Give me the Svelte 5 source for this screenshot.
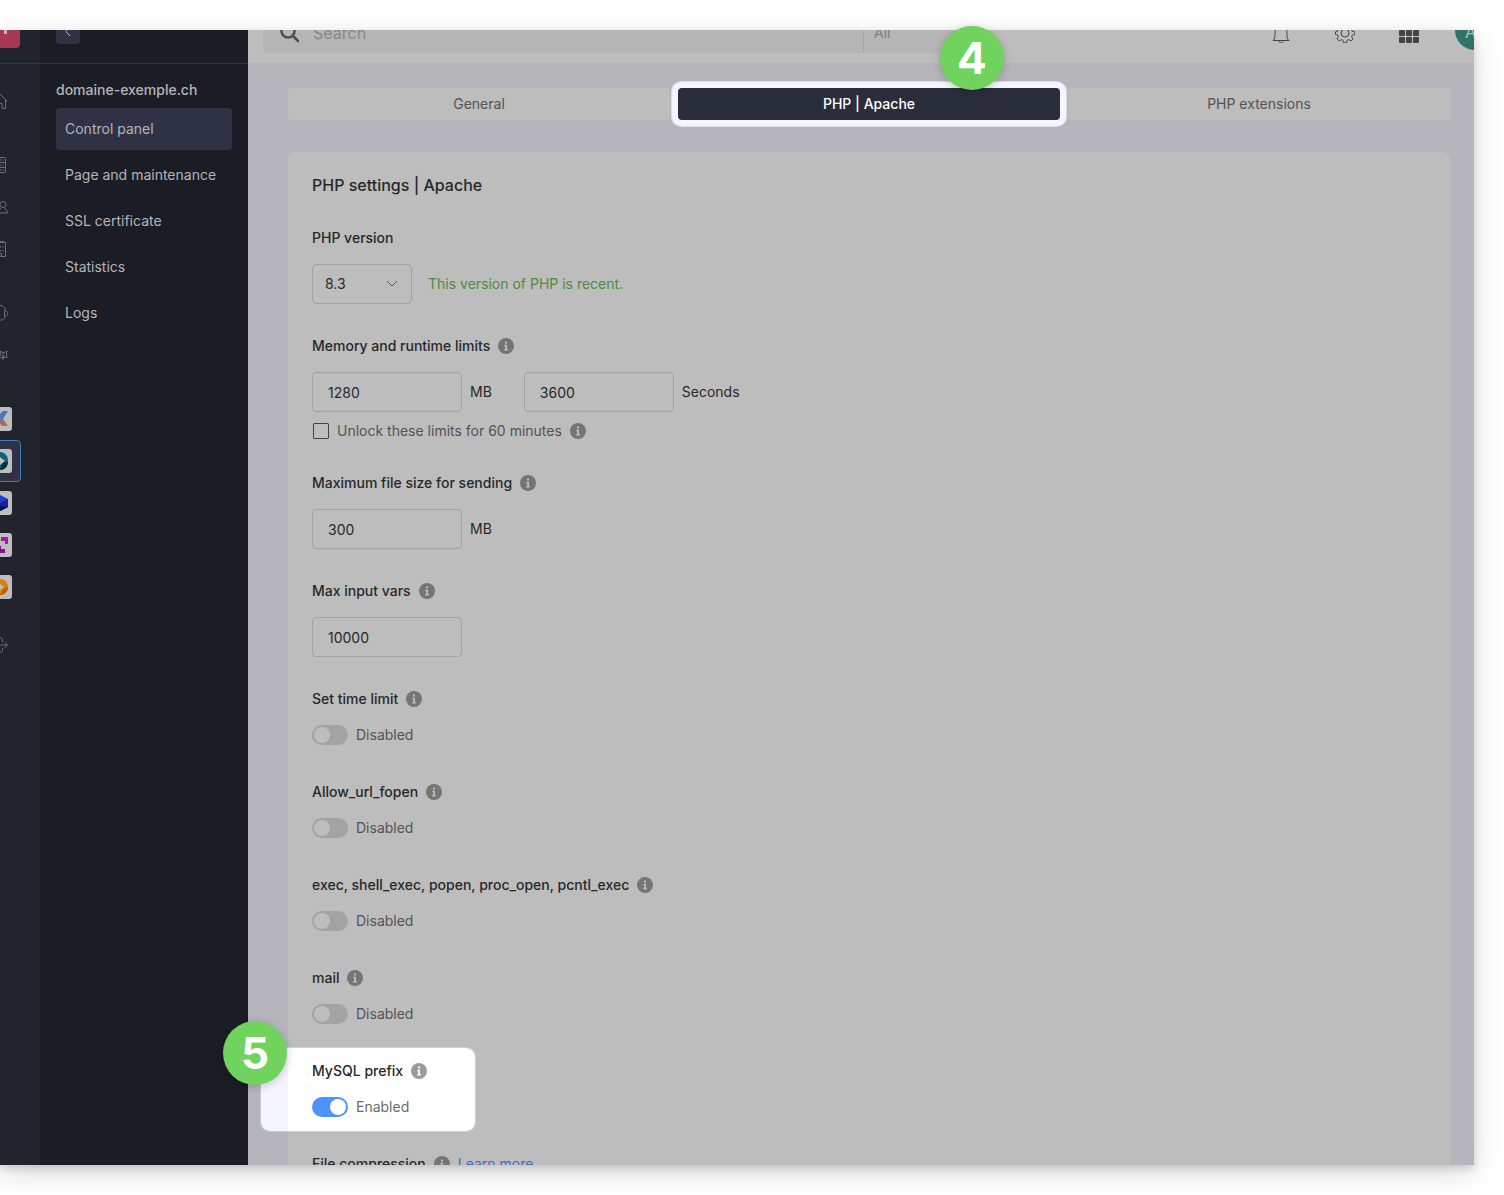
<script>
 const menu = ['Control panel', 'Page and maintenance', 'SSL certificate', 'Statistics', 'Logs'];
 const tabs = ['General', 'PHP | Apache', 'PHP extensions'];
 let current = 'Control panel';
 let activeTab = 'PHP | Apache';
 let version = '8.3';
 let memory = '1280';
 let runtime = '3600';
 let unlock = false;
 let fileSize = '300';
 let inputVars = '10000';
 let switches = [
     { id: 'time', name: 'Set time limit', on: false },
     { id: 'fopen', name: 'Allow_url_fopen', on: false },
     { id: 'exec', name: 'exec, shell_exec, popen, proc_open, pcntl_exec', on: false },
     { id: 'mail', name: 'mail', on: false },
     { id: 'mysql', name: 'MySQL prefix', on: true, step: 5 },
 ];
</script>

{#snippet info()}
    <svg class="info" viewBox="0 0 16 16" aria-hidden="true">
        <circle cx="8" cy="8" r="8" />
        <path d="M7 3.6h2v2H7zM6.2 6.8H9v4.4h1v1.2H6v-1.2h1.2V8h-1z" />
    </svg>
{/snippet}

<div class="page">
    <div class="window">
        <div class="app">
            <nav class="rail" aria-label="Products">
                <div class="brand">
                    <a class="logo" href="#home" aria-label="Home">
                        <svg viewBox="0 0 40 40"><path d="M10 12h17v14h-3V15H10z" fill="#bdbdbd" /></svg>
                    </a>
                </div>
                <a class="item first" href="#dashboard" aria-label="Dashboard">
                    <svg class="line" viewBox="0 0 16 16"><path d="M.5 8.5 8 1l7.500 7.500M2.500 7v8.500h3.500v-5h4v5h3.500V7" /></svg>
                </a>
                <a class="item gap" href="#servers" aria-label="Servers">
                    <svg class="line" viewBox="0 0 16 16"><rect x="2.500" y=".5" width="11" height="15" rx="1" /><path d="M2.500 5.500h11M2.500 10.500h11M8 3h1.500M8 8h1.500M8 13h1.500M11 2.500v1M11 7.500v1M11 12.500v1" /></svg>
                </a>
                <a class="item" href="#users" aria-label="Users">
                    <svg class="line" viewBox="0 0 16 16"><circle cx="11" cy="5.500" r="3" /><path d="M9 8.500c0 2-3 2.500-3.500 5.500h10c0-3-2.500-3.500-3-5.500M5 3C2 3 2 8 4 9c-1 1-3 1-3.500 4h3" /></svg>
                </a>
                <a class="item" href="#company" aria-label="Company">
                    <svg class="line" viewBox="0 0 16 16"><path d="M2.500 15.500v-14h11v14zM3.500.5h8l2 1.500M5.500 5v2M8.500 5v1.500M11 5v1.500M5.500 9v1.500M8.500 9v1.500M11 9v1.500M6.500 15.500v-3h3v3" /></svg>
                </a>
                <a class="item gap" href="#support" aria-label="Support">
                    <svg class="line" viewBox="0 0 16 16"><path d="M2.500 6C3 2 5 .5 8 .5S13 2 13.500 6M2.500 5.500c-3 0-3 6 0 6zM12.500 5.500c4 0 4 6 0 6zM13 11.500c-.5 3-2 3.500-4 3.500H7" /></svg>
                </a>
                <a class="item" href="#news" aria-label="News">
                    <svg class="line" viewBox="0 0 16 16"><path d="M8 4.500h1l2 1h2M13.500 4.500h2M13.500 10.500h2M14.500 4.500v6M8 11l2-1 1 2.500 1-4M11 5.500v5M11 10.500h2.500M8 4.500l1 2.500-1 2" /></svg>
                </a>
                <a class="item gap" href="#ksuite" aria-label="kSuite">
                    <svg class="tile" viewBox="0 0 24 24">
                        <defs><linearGradient id="k" x2="0" y2="1"><stop offset="0" stop-color="#3878c8" /><stop offset=".45" stop-color="#5a70b4" /><stop offset="1" stop-color="#d36539" /></linearGradient></defs>
                        <path d="M4 4h5v6l6-6h5l-5 8 5 7h-6l-5-6v6H4z" fill="url(#k)" />
                    </svg>
                </a>
                <a class="item selected" href="#hosting" aria-label="Hosting">
                    <svg class="tile" viewBox="0 0 24 24">
                        <path d="M12 3c5 0 8 4 8 9s-3 9-8 9z" fill="#126076" />
                        <path d="M15 13h5c0 4-3 8-8 8z" fill="#072f44" />
                        <path d="M12 8l5 4-5 4z" fill="#bdbdbd" />
                    </svg>
                </a>
                <a class="item" href="#cloud" aria-label="Cloud">
                    <svg class="tile" viewBox="0 0 24 24">
                        <path d="M12 4l8 4v8l-8 4-8-4V8z" fill="#243bd0" />
                        <path d="M12 12l8-4v8l-8 4z" fill="#172397" />
                        <path d="M12 15l8 1-8 4z" fill="#090e50" />
                    </svg>
                </a>
                <a class="item" href="#events" aria-label="Events">
                    <svg class="tile" viewBox="0 0 24 24">
                        <path d="M13 4h7v7h-3V8h-4z" fill="#a519ac" />
                        <path d="M4 13h9v3h4v4H4z" fill="#85128f" />
                    </svg>
                </a>
                <a class="item" href="#streaming" aria-label="Streaming">
                    <svg class="tile" viewBox="0 0 24 24">
                        <circle cx="12" cy="12" r="8" fill="#d98412" />
                        <path d="M12 20c5 0 8-4 8-8l-4 1z" fill="#c45d12" />
                        <path d="M12 9l4 3-4 3z" fill="#bdbdbd" />
                    </svg>
                </a>
                <a class="item exit" href="#logout" aria-label="Log out">
                    <svg class="line" viewBox="0 0 16 16"><path d="M10.500 5V2.500c0-1-.5-1.500-1.500-1.500H2v14h7c1 0 1.500-.5 1.500-1.500V11M6 8h9.500M12.500 5l3 3-3 3" /></svg>
                </a>
            </nav>

            <aside class="sidebar">
                <div class="back">
                    <button aria-label="Back">
                        <svg viewBox="0 0 24 24"><path d="M14 7l-4 4.500 4 4.500" /></svg>
                    </button>
                </div>
                <h2>domaine-exemple.ch</h2>
                <ul>
                    {#each menu as name}
                        <li><a href="#{name}" class:current={current === name}>{name}</a></li>
                    {/each}
                </ul>
            </aside>

            <div class="content">
                <header>
                    <div class="search">
                        <svg viewBox="0 0 20 20"><circle cx="8" cy="8" r="6.500" /><path d="M13 13l5 5" /></svg>
                        <input type="search" placeholder="Search" aria-label="Search" />
                        <button>All</button>
                    </div>
                    <div class="tools">
                        <button aria-label="Notifications">
                            <svg class="stroke" viewBox="0 0 20 20"><path d="M2 17.500c2-1.500 2-4 2-7C4 5 6 2.500 10 2.500s6 2.500 6 8c0 3 0 5.500 2 7zM7.500 17.500c.5 3 4.500 3 5 0" /></svg>
                        </button>
                        <button aria-label="Settings">
                            <svg class="stroke" viewBox="0 0 20 20"><circle cx="10" cy="10" r="4" /><path d="M8.500.5h3l.6 2.500 1.600.7 2.200-1.400 2.100 2.100-1.400 2.200.7 1.600 2.500.6v2.600l-2.500.6-.7 1.600 1.400 2.300-2.100 2.100-2.200-1.400-1.600.7-.6 2.500h-3l-.6-2.500-1.600-.7-2.200 1.400L2 15.900l1.400-2.300-.7-1.600-2.200-.6V8.800l2.200-.6.7-1.600L2 4.400l2.100-2.100 2.200 1.400L7.900 3z" /></svg>
                        </button>
                        <button aria-label="Applications">
                            <svg class="fill" viewBox="0 0 20 20">
                                {#each [0, 7, 14] as y}
                                    {#each [0, 7, 14] as x}
                                        <rect {x} {y} width="6" height="6" rx="1" />
                                    {/each}
                                {/each}
                            </svg>
                        </button>
                        <button class="avatar" aria-label="Account">AJ</button>
                    </div>
                </header>

                <main>
                    <nav class="tabs" aria-label="PHP">
                        {#each tabs as name}
                            <button class:active={activeTab === name} on:click={() => activeTab = name}>{name}</button>
                        {/each}
                    </nav>

                    <section class="card">
                        <h1>PHP settings | Apache</h1>

                        <div class="setting">
                            <div class="label"><label for="version">PHP version</label></div>
                            <div class="row">
                                <div class="select">
                                    <select id="version" bind:value={version}>
                                        <option>8.3</option>
                                        <option>8.2</option>
                                    </select>
                                    <svg viewBox="0 0 12 12"><path d="M1 3l5 5 5-5" /></svg>
                                </div>
                                <span class="ok">This version of PHP is recent.</span>
                            </div>
                        </div>

                        <div class="setting">
                            <div class="label"><label for="memory">Memory and runtime limits</label>{@render info()}</div>
                            <div class="row limits">
                                <div class="field">
                                    <input id="memory" type="text" bind:value={memory} />
                                    <span>MB</span>
                                </div>
                                <div class="field">
                                    <input id="runtime" type="text" bind:value={runtime} />
                                    <label for="runtime">Seconds</label>
                                </div>
                            </div>
                            <div class="unlock">
                                <input id="unlock" type="checkbox" bind:checked={unlock} />
                                <label for="unlock">Unlock these limits for 60 minutes</label>
                                {@render info()}
                            </div>
                        </div>

                        <div class="setting">
                            <div class="label"><label for="size">Maximum file size for sending</label>{@render info()}</div>
                            <div class="field">
                                <input id="size" type="text" bind:value={fileSize} />
                                <span>MB</span>
                            </div>
                        </div>

                        <div class="setting">
                            <div class="label"><label for="vars">Max input vars</label>{@render info()}</div>
                            <div class="field">
                                <input id="vars" type="text" bind:value={inputVars} />
                            </div>
                        </div>

                        {#each switches as item}
                            <div class="setting" class:spotlight={item.step}>
                                {#if item.step}
                                    <span class="step">{item.step}</span>
                                {/if}
                                <div class="label"><label for={item.id}>{item.name}</label>{@render info()}</div>
                                <div class="toggle">
                                    <input id={item.id} type="checkbox" role="switch" bind:checked={item.on} />
                                    <span>{item.on ? 'Enabled' : 'Disabled'}</span>
                                </div>
                            </div>
                        {/each}

                        <div class="setting">
                            <div class="label">
                                <span>File compression</span>{@render info()}
                                <a href="#compression">Learn more</a>
                            </div>
                        </div>
                    </section>
                </main>
            </div>
        </div>
    </div>
    <span class="step tab-step">4</span>
</div>

<style>
 :global(body) {
     background: #fff;
     overflow: hidden;
 }
 .page {
     position: relative;
     box-sizing: border-box;
     height: 100vh;
     padding: 30px 30px 30px 0;
     font: 14px/20px Inter, "Liberation Sans", sans-serif;
     color: #272829;
 }
 .page * {
     box-sizing: border-box;
 }
 .window {
     height: 100%;
     overflow: hidden;
     background: #b6b5bc;
     box-shadow: 0 8px 28px rgba(0, 0, 0, .14), 0 4px 8px rgba(0, 0, 0, .14);
 }
 .app {
     display: flex;
     min-height: calc(100% + 30px);
     margin: -30px 0 0 -40px;
 }
 button,
 input,
 select {
     margin: 0;
     font: inherit;
     color: inherit;
 }
 button {
     padding: 0;
     border: 0;
     background: none;
 }
 a {
     text-decoration: none;
 }

 .rail {
     flex: none;
     display: flex;
     flex-direction: column;
     align-items: center;
     width: 80px;
     background: #21242c;
 }
 .brand,
 .back {
     width: 100%;
     height: 64px;
     border-bottom: 1px solid #313443;
 }
 .logo {
     display: block;
     width: 40px;
     height: 40px;
     margin: 8px auto;
     border-radius: 4px;
     background: #a93654;
 }
 .item {
     display: flex;
     align-items: center;
     justify-content: center;
     width: 42px;
     height: 42px;
 }
 .item.first {
     margin-top: 16px;
 }
 .item.gap {
     margin-top: 22px;
 }
 .item.exit {
     margin-top: 16px;
 }
 .item.selected {
     border: 1px solid #4379bf;
     border-radius: 4px;
     background: #2f3244;
 }
 .line {
     width: 16px;
     height: 16px;
     fill: none;
     stroke: #64717f;
 }
 .tile {
     width: 24px;
     height: 24px;
     border-radius: 3px;
     background: #bdbdbd;
 }

 .sidebar {
     flex: none;
     width: 208px;
     background: #1a1d24;
     color: #b4b5b8;
 }
 .back {
     padding: 20px 16px;
 }
 .back button {
     display: block;
     width: 24px;
     height: 24px;
     border-radius: 4px;
     background: #2f3244;
 }
 .back svg {
     display: block;
     fill: none;
     stroke: #bdbdbd;
 }
 h2 {
     margin: 16px 16px 8px;
     font-size: 14px;
     font-weight: 500;
 }
 ul {
     display: grid;
     gap: 4px;
     margin: 0 16px;
     padding: 0;
     list-style: none;
 }
 li a {
     display: block;
     padding: 11px 9px;
     border-radius: 4px;
     color: inherit;
 }
 li .current {
     background: #2f3244;
 }

 .content {
     flex: 1;
     min-width: 0;
 }
 header {
     display: flex;
     justify-content: space-between;
     height: 63px;
     background: #bdbdbd;
 }
 .search {
     display: flex;
     align-items: center;
     width: 708px;
     height: 40px;
     margin: 13px 15px 0;
     border-radius: 4px;
     background: #b5b5b5;
     font-size: 16px;
 }
 .search svg {
     flex: none;
     width: 20px;
     height: 20px;
     margin: 0 13px 0 17px;
     fill: none;
     stroke: #4d4d4d;
     stroke-width: 2.500;
     stroke-linecap: round;
 }
 .search input {
     flex: 1;
     min-width: 0;
     padding: 0;
     border: 0;
     background: none;
 }
 .search input::placeholder {
     color: #85868e;
 }
 .search button {
     width: 108px;
     height: 40px;
     padding-left: 10px;
     border-left: 1px solid #a5a5a5;
     font-size: 14px;
     text-align: left;
     color: #808080;
 }
 .tools {
     display: flex;
     align-items: center;
     gap: 44px;
     margin-right: -21px;
     padding-top: 2px;
 }
 .tools svg {
     display: block;
     width: 20px;
     height: 20px;
 }
 .stroke {
     fill: none;
     stroke: #444;
     stroke-linejoin: round;
 }
 .fill {
     fill: #444;
 }
 .avatar {
     width: 40px;
     height: 40px;
     margin: -6px 0 0 -8px;
     padding-top: 4px;
     border-radius: 50%;
     background: #2f7369;
     color: #bdbdbd;
     font-size: 16px;
 }

 main {
     padding: 25px 24px 0 40px;
 }
 .tabs {
     display: grid;
     grid-template-columns: repeat(3, 1fr);
     gap: 8px;
 }
 .tabs button {
     height: 32px;
     border-radius: 4px;
     background: #bdbdbd;
     color: #535354;
 }
 .tabs .active {
     background: #2a2d3b;
     box-shadow: 0 0 0 6px #f5f5fe, 0 0 0 7px #dddce5;
     color: #fff;
     font-weight: 500;
 }
 .card {
     margin-top: 32px;
     padding: 24px;
     border-radius: 8px;
     background: #bdbdbd;
 }
 h1 {
     margin: 0 0 34px;
     font-size: 16px;
     line-height: 18px;
     font-weight: 500;
 }
 .setting {
     margin-bottom: 32px;
 }
 .label {
     display: flex;
     align-items: center;
     gap: 8px;
     margin-bottom: 16px;
     font-weight: 500;
 }
 .label a {
     color: #3c6fb9;
     font-weight: 400;
 }
 .info {
     width: 16px;
     height: 16px;
     fill: #757575;
 }
 .info path {
     fill: #bdbdbd;
 }
 .row,
 .field,
 .toggle,
 .unlock {
     display: flex;
     align-items: center;
 }
 .row {
     gap: 16px;
 }
 .limits {
     gap: 32px;
 }
 .field,
 .toggle,
 .unlock {
     gap: 8px;
 }
 .select {
     position: relative;
 }
 .select select {
     appearance: none;
     width: 100px;
     height: 40px;
     padding: 0 12px;
     border: 1px solid #a3a3a3;
     border-radius: 4px;
     background: none;
 }
 .select svg {
     position: absolute;
     top: 14px;
     right: 14px;
     width: 12px;
     height: 12px;
     fill: none;
     stroke: #555;
     pointer-events: none;
 }
 .ok {
     color: #4a8c40;
 }
 .field input {
     width: 150px;
     height: 40px;
     padding: 0 15px;
     border: 1px solid #a3a3a3;
     border-radius: 4px;
     background: none;
 }
 .unlock {
     margin-top: 9px;
     color: #535354;
 }
 .unlock input {
     appearance: none;
     width: 16px;
     height: 16px;
     margin-left: 1px;
     border: 1px solid #444;
     border-radius: 1px;
 }
 .toggle {
     padding-bottom: 5px;
     color: #535354;
 }
 .toggle input {
     appearance: none;
     width: 36px;
     height: 20px;
     padding: 2px;
     border-radius: 10px;
     background: #a3a3a3;
 }
 .toggle input::before {
     content: '';
     display: block;
     width: 16px;
     height: 16px;
     border-radius: 50%;
     background: #bdbdbd;
 }
 .toggle input:checked {
     background: #4c93fb;
 }
 .toggle input:checked::before {
     margin-left: 16px;
     background: #fff;
 }

 .spotlight {
     position: relative;
     z-index: 0;
     width: 163px;
 }
 .spotlight::before {
     content: '';
     position: absolute;
     z-index: -1;
     inset: -13px 0 -9px -51px;
     border-radius: 9px;
     background: linear-gradient(90deg, #f5f5ff 27px, #fff 27px);
     box-shadow: 0 0 0 1px rgba(255, 255, 255, .3);
 }
 .spotlight .info {
     fill: #9b9b9b;
 }
 .spotlight .info path {
     fill: #fff;
 }
 .spotlight .toggle {
     color: #6b6b6b;
 }
 .step {
     position: absolute;
     top: -40px;
     left: -89px;
     width: 64px;
     height: 64px;
     border-radius: 50%;
     background: #6fd35d;
     box-shadow: 0 2px 8px rgba(0, 0, 0, .2);
     color: #fff;
     font-size: 44px;
     font-weight: 700;
     line-height: 64px;
     text-align: center;
 }
 .tab-step {
     top: 26px;
     left: 940px;
 }
</style>
